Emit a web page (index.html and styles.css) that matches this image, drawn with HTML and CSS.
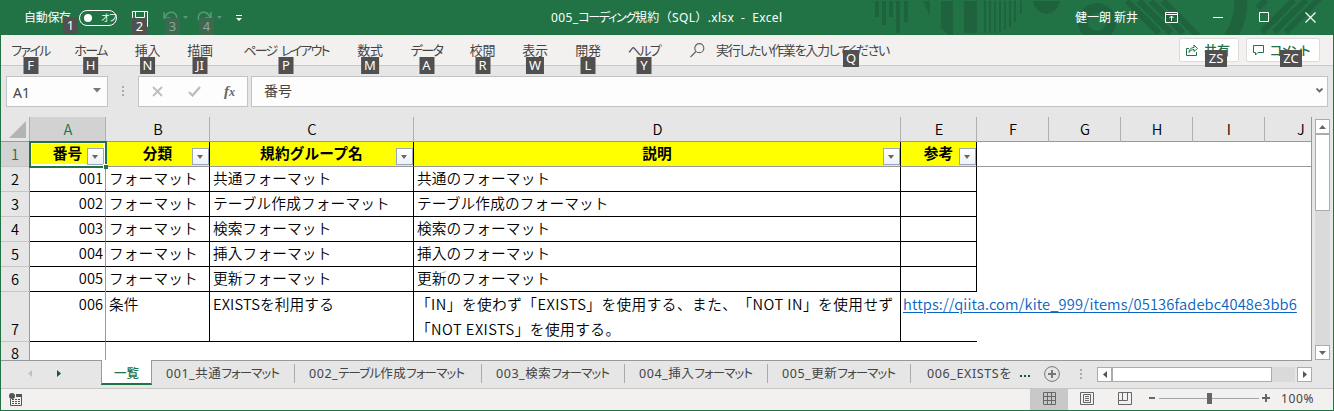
FILE: index.html
```html
<!DOCTYPE html>
<html lang="ja">
<head>
<meta charset="utf-8">
<title>005_コーディング規約（SQL）.xlsx - Excel</title>
<link rel="stylesheet" href="styles.css">
</head>
<body>
<div class="window">
  <header class="titlebar">
    <svg class="pattern" width="460" height="35" viewBox="874 0 460 35" fill="none" stroke="#1e633e">
      <path stroke-width="4" d="M877 1v16M884 1v24M891 1v16M898 1v32M906 1v21"/>
      <path fill="#1e633e" stroke="none" d="M923 1h7v15zM941 1h12v34h-4l-8-7zM964 1h13v32h-13zM1033 1h27c-3 17-24 17-27 0z"/>
      <path stroke-width="2" d="M985 1v32M990 1v32M995 1v32M1000 1v31M1005 1v29M1010 1v26M1015 1v21M1021 1v13"/>
      <circle cx="1097" cy="22" r="14" stroke-width="10"/>
      <path stroke-width="6" d="M1127 1l32 32M1139 1l32 32M1151 1l32 32M1163 1l37 37M1262 32l32-32M1274 32l32-32M1286 32l34-34M1258 8l8-8"/>
      <path stroke-width="13" d="M1241 0q0 22-11 37"/>
    </svg>
    <div class="autosave"><span class="autosave-label">自動保存</span><span class="toggle"><i></i><b>オフ</b></span><kbd class="k1">1</kbd></div>
    <div class="quick">
      <span class="save"><svg width="17" height="17" viewBox="0 0 17 17" fill="none" stroke="#fff"><path d="M.5.5h15v15H.5zM3.500.5v6h9v-6"/></svg><kbd>2</kbd></span>
      <span class="undo"><svg width="26" height="17" viewBox="0 0 26 17" fill="none" stroke="#5b967a" stroke-width="1.500"><path d="M1 1v6h6M1.500 7C4 1 9 0 12 2.500 15 6 14 8 12 10l-5 5"/><path d="M20 5h5l-2.500 3z" fill="#5b967a" stroke="none"/></svg><kbd class="dim">3</kbd></span>
      <span class="redo"><svg width="26" height="17" viewBox="0 0 26 17" fill="none" stroke="#5b967a" stroke-width="1.500"><path d="M14 1v6H8M13.500 7C11 1 6 0 3 2.500 0 6 1 8 3 10l5 5"/><path d="M20 5h5l-2.500 3z" fill="#5b967a" stroke="none"/></svg><kbd class="dim">4</kbd></span>
      <svg class="more" width="6" height="7" viewBox="0 0 6 7" fill="#fff"><path d="M0 0h6v1H0zM0 3h6L3 6z"/></svg>
    </div>
    <div class="doc-title">005_<span class="kana">コーディング</span>規約（SQL）.xlsx&nbsp; -&nbsp; Excel</div>
    <div class="user">健一朗 新井</div>
    <div class="controls">
      <svg width="14" height="11" viewBox="0 0 14 11" fill="none" stroke="#fff"><path d="M.5.5h12v10H.5zM.5 2.500h12M6.500 9V4M4.500 6l2-2 2 2"/></svg>
      <svg width="11" height="11" viewBox="0 0 11 11" stroke="#fff"><path d="M0 5.500h10"/></svg>
      <svg width="11" height="11" viewBox="0 0 11 11" fill="none" stroke="#fff"><path d="M.5.5h9v9h-9z"/></svg>
      <svg width="11" height="11" viewBox="0 0 11 11" stroke="#fff" stroke-width="1.200"><path d="M.5.5l10 10M10.500.5l-10 10"/></svg>
    </div>
  </header>

  <nav class="ribbon">
    <div class="tab kana"><span>ファイル</span><kbd>F</kbd></div>
    <div class="tab kana"><span>ホーム</span><kbd>H</kbd></div>
    <div class="tab"><span>挿入</span><kbd>N</kbd></div>
    <div class="tab"><span>描画</span><kbd>JI</kbd></div>
    <div class="tab kana layout"><span>ページ レイアウト</span><kbd>P</kbd></div>
    <div class="tab"><span>数式</span><kbd>M</kbd></div>
    <div class="tab kana"><span>データ</span><kbd>A</kbd></div>
    <div class="tab"><span>校閲</span><kbd>R</kbd></div>
    <div class="tab"><span>表示</span><kbd>W</kbd></div>
    <div class="tab"><span>開発</span><kbd>L</kbd></div>
    <div class="tab kana"><span>ヘルプ</span><kbd>Y</kbd></div>
    <div class="search"><svg width="15" height="15" viewBox="0 0 15 15" fill="none" stroke="#666" stroke-width="1.200"><circle cx="9.300" cy="5.200" r="4.500"/><path d="M6 8.500L.5 14"/></svg><span>実行したい作業を入力してください</span><kbd>Q</kbd></div>
    <div class="share"><svg width="13" height="12" viewBox="0 0 13 12" fill="none" stroke="#217346"><path d="M3 4.500H.5v7h10V8M3 8.500c0-3 2-5 5-5V1l3.500 3.500L8 7.500V5.500c-2 0-4 1-5 3z"/></svg><span>共有</span><kbd>ZS</kbd></div>
    <div class="share comment"><svg width="12" height="11" viewBox="0 0 12 11" fill="none" stroke="#217346"><path d="M.5.5h10v7H5l-2.500 2.500V7.500h-2z"/></svg><span class="kana">コメント</span><kbd>ZC</kbd></div>
  </nav>

  <div class="formula">
    <div class="namebox"><span>A1</span><svg width="8" height="5" viewBox="0 0 8 5" fill="#777"><path d="M0 0h8L4 4.500z"/></svg></div>
    <svg class="dots" width="2" height="11" viewBox="0 0 2 11" fill="#aaa"><path d="M0 0h2v2H0zM0 4h2v2H0zM0 8h2v2H0z"/></svg>
    <div class="fxbox">
      <svg width="11" height="11" viewBox="0 0 11 11" stroke="#bdbdbd" stroke-width="1.800"><path d="M1 1l9 9M10 1l-9 9"/></svg>
      <svg width="13" height="11" viewBox="0 0 13 11" fill="none" stroke="#bdbdbd" stroke-width="2.300"><path d="M1 6l3.500 3.500L12 1"/></svg>
      <em>f<small>x</small></em>
    </div>
    <div class="input"><span>番号</span><svg width="7" height="5" viewBox="0 0 7 5" fill="none" stroke="#666" stroke-width="1.800"><path d="M.5.5l3 3 3-3"/></svg></div>
  </div>

  <main class="main">
    <div class="sheet">
      <div class="row heads"><div class="corner"><svg width="17" height="17" viewBox="0 0 17 17" fill="#b4b4b4"><path d="M17 0v17H0z"/></svg></div><div class="sel">A</div><div>B</div><div>C</div><div>D</div><div>E</div><div>F</div><div>G</div><div>H</div><div>I</div><div class="last">J</div></div>
      <div class="row first"><div class="num sel">1</div><div class="active"><span>番号</span><i class="filter"></i><i class="handle"></i></div><div>分類<i class="filter"></i></div><div>規約グループ名<i class="filter"></i></div><div>説明<i class="filter"></i></div><div>参考<i class="filter"></i></div><div class="blank"></div></div>
      <div class="row"><div class="num">2</div><div class="a">001</div><div>フォーマット</div><div>共通フォーマット</div><div>共通のフォーマット</div><div></div></div>
      <div class="row"><div class="num">3</div><div class="a">002</div><div>フォーマット</div><div>テーブル作成フォーマット</div><div>テーブル作成のフォーマット</div><div></div></div>
      <div class="row"><div class="num">4</div><div class="a">003</div><div>フォーマット</div><div>検索フォーマット</div><div>検索のフォーマット</div><div></div></div>
      <div class="row"><div class="num">5</div><div class="a">004</div><div>フォーマット</div><div>挿入フォーマット</div><div>挿入のフォーマット</div><div></div></div>
      <div class="row"><div class="num">6</div><div class="a">005</div><div>フォーマット</div><div>更新フォーマット</div><div>更新のフォーマット</div><div></div></div>
      <div class="row tall"><div class="num">7</div><div class="a">006</div><div>条件</div><div>EXISTSを利用する</div><div class="wide">「IN」を使わず「EXISTS」を使用する、また、「NOT IN」を使用せず<br>「NOT EXISTS」を使用する。</div><div class="linkcell"><a>https://qiita.com/kite_999/items/05136fadebc4048e3bb6</a></div></div>
      <div class="row end"><div class="num">8</div><div class="a"></div></div>
    </div>
    <div class="vscroll">
      <div class="btn"><svg width="7" height="4" viewBox="0 0 7 4" fill="#666"><path d="M0 4h7L3.500 0z"/></svg></div>
      <div class="vthumb"></div><div class="vtrack"></div>
      <div class="btn"><svg width="7" height="4" viewBox="0 0 7 4" fill="#666"><path d="M0 0h7L3.500 4z"/></svg></div>
    </div>
  </main>

  <div class="sheets">
    <div class="arrows"><svg width="4" height="7" viewBox="0 0 4 7" fill="#c0c0c0"><path d="M4 0v7L0 3.500z"/></svg><svg width="4" height="7" viewBox="0 0 4 7" fill="#0e5c2f"><path d="M0 0v7l4-3.500z"/></svg></div>
    <div class="st on">一覧</div>
    <div class="st w1">001_共通<span class="kana">フォーマット</span></div>
    <div class="st w2">002_<span class="kana">テーブル</span>作成<span class="kana">フォーマット</span></div>
    <div class="st w3">003_検索<span class="kana">フォーマット</span></div>
    <div class="st w3">004_挿入<span class="kana">フォーマット</span></div>
    <div class="st w3">005_更新<span class="kana">フォーマット</span></div>
    <div class="st cut"><span>006_EXISTSを</span></div>
    <svg class="ell" width="11" height="2" viewBox="0 0 11 2" fill="#0e5c2f"><path d="M0 0h2v2H0zM4 0h2v2H4zM8 0h2v2H8z"/></svg>
    <svg class="add" width="16" height="16" viewBox="0 0 16 16" fill="none" stroke="#777"><circle cx="8" cy="8" r="7.400"/><path stroke-width="2" d="M4 8h8M8 4v8"/></svg>
    <svg class="grip" width="2" height="11" viewBox="0 0 2 11" fill="#aaa"><path d="M0 0h2v2H0zM0 4h2v2H0zM0 8h2v2H0z"/></svg>
    <div class="hscroll">
      <div class="btn"><svg width="4" height="7" viewBox="0 0 4 7" fill="#555"><path d="M4 0v7L0 3.500z"/></svg></div>
      <div class="hthumb"></div><div class="htrack"></div>
      <div class="btn"><svg width="4" height="7" viewBox="0 0 4 7" fill="#555"><path d="M0 0v7l4-3.500z"/></svg></div>
    </div>
  </div>

  <footer class="status">
    <svg class="macro" width="13" height="13" viewBox="0 0 13 13"><path fill="none" stroke="#555" d="M1.500 6v6.500h11v-11H7"/><path fill="#555" d="M7 1h6v3H7zM3 6h2v1H3zM6 6h2v1H6zM9 6h2v1H9zM3 8h2v1H3zM6 8h2v1H6zM9 8h2v1H9zM3 10h2v1H3zM6 10h2v1H6zM9 10h2v1H9z"/><circle cx="3" cy="3" r="3" fill="#555"/></svg>
    <div class="view on"><svg width="13" height="13" viewBox="0 0 13 13" fill="none" stroke="#666"><path d="M.5.5h12v12H.5zM.5 4.500h12M.5 8.500h12M4.500.5v12M8.500.5v12"/></svg></div>
    <div class="view"><svg width="14" height="13" viewBox="0 0 14 13" fill="none" stroke="#666"><path d="M.5.5h13v12H.5zM3.500 2.500h7v8h-7zM5 4.500h4M5 6.500h4M5 8.500h4"/></svg></div>
    <div class="view"><svg width="14" height="13" viewBox="0 0 14 13" fill="none" stroke="#666"><path d="M.5.5h13v12H.5zM4.500.5v8M9.500.5v8M.5 8.500h9"/></svg></div>
    <svg class="zoom" width="122" height="11" viewBox="0 0 122 11" fill="#666"><path fill="#a6a6a6" d="M10 5h100v1H10z"/><path d="M0 4h6v2H0zM58 0h5v11h-5zM113 4h8v2h-8zM116 1h2v8h-2z"/></svg>
    <span class="pct">100%</span>
  </footer>
</div>
</body>
</html>
```
FILE: styles.css
```css
* { box-sizing: border-box; }
body { margin: 0; font: 12px/16px "Noto Sans", "Noto Sans CJK JP", sans-serif; color: #444; }
svg { display: block; flex: none; }
i, em { font-style: normal; }
.window { width: 1334px; height: 411px; display: flex; flex-direction: column; background: #e6e6e6; border: solid #217346; border-width: 0 1px 1px; overflow: hidden; }
.kana { font-feature-settings: "palt"; letter-spacing: -1.6px; }
kbd { position: absolute; z-index: 3; min-width: 15px; height: 17px; padding: 0 3px; background: #505050; color: #fff; font: 13px/17px "Noto Sans", sans-serif; letter-spacing: 0; text-align: center; }
kbd.dim { background: #3e684f; color: #8aa898; }

.titlebar { position: relative; flex: none; height: 35px; margin: 0 -1px; padding-left: 24px; display: flex; background: #217346; color: #fff; }
.pattern { position: absolute; right: 0; top: 0; }
.titlebar > div { position: relative; }
.autosave { display: flex; align-items: center; width: 108px; gap: 9px; }
.autosave-label { width: 46px; letter-spacing: -.3px; white-space: nowrap; }
.toggle { display: flex; align-items: center; gap: 8px; width: 38px; height: 16px; padding-left: 4px; border: 1px solid #fff; border-radius: 8px; }
.toggle i { flex: none; width: 8px; height: 8px; border-radius: 50%; background: #fff; }
.toggle b { font-weight: 400; font-size: 9px; letter-spacing: -1.5px; white-space: nowrap; line-height: 14px; padding: 1px 0 0 1px; }
.k1 { left: 39px; top: 17px; }
.quick { display: flex; padding-top: 11px; width: 419px; }
.quick > span { position: relative; height: 17px; }
.quick kbd { top: 7px; }
.save { width: 31px; } .save kbd { left: 0; }
.undo { width: 34px; } .undo kbd { left: 2px; }
.redo { width: 39px; } .redo kbd { left: 2px; }
.more { margin-top: 4px; }
.doc-title { width: 524px; line-height: 35px; white-space: nowrap; letter-spacing: .35px; }
.doc-title .kana { letter-spacing: -1.3px; }
.user { width: 90px; line-height: 35px; white-space: nowrap; }
.controls { display: flex; align-items: center; gap: 35px; }
.controls svg:first-child { margin-right: -1px; }

.ribbon { flex: none; height: 31px; display: grid; grid-template-columns: 59px 61px 53px 52px 120px 48px 65px 47px 58px 48px 64px 503px 67px 74px; background: #f3f1ef; border-bottom: 1px solid #c8c8c8; font-size: 13px; }
.tab { position: relative; display: flex; justify-content: center; line-height: 30px; white-space: nowrap; }
.tab kbd { bottom: -9px; left: 50%; transform: translateX(-50%); }
.tab:not(.kana) { letter-spacing: -.3px; }
.layout { letter-spacing: -1.8px; word-spacing: 3px; }
.search { position: relative; display: flex; align-items: center; gap: 11px; padding-left: 14px; white-space: nowrap; font-feature-settings: "palt"; letter-spacing: -1.3px; }
.search kbd { left: 167px; top: 15px; }
.share { position: relative; display: flex; align-items: center; gap: 5px; height: 24px; margin: 3px 8px 0 0; width: 60px; padding-left: 6px; background: #fff; border: 1px solid #dedcda; border-radius: 2px; color: #217346; font-weight: 500; white-space: nowrap; }
.comment { width: 74px; }
.share kbd { left: 25px; top: 11px; width: 22px; }
.comment kbd { left: 33px; }

.formula { flex: none; height: 51px; display: flex; align-items: flex-start; padding: 10px 5px; font-size: 14px; }
.formula > div { height: 31px; background: #fdfdfd; border: 1px solid #c3c3c3; display: flex; align-items: center; }
.namebox { width: 102px; padding: 3px 6px 0; justify-content: space-between; }
.namebox svg { margin-top: -6px; }
.dots { margin: 10px 14px 0; }
.fxbox { width: 110px; padding-left: 13px; gap: 25px; }
.fxbox em { font: italic bold 15px/20px "Liberation Serif", serif; color: #666; margin-left: -2px; }
.fxbox small { font-size: 12px; }
.input { margin-left: 3px; width: 1077px; padding: 0 4px 2px 12px; justify-content: space-between; }

.main { flex: none; height: 243px; display: flex; font: 350 14.67px/25px "Noto Sans CJK JP", sans-serif; color: #000; }
.sheet { width: 1311px; height: 243px; background: #fff; border: solid #999; border-width: 0 1px 0 0; overflow: hidden; text-spacing-trim: space-all; letter-spacing: .15px; }
.row { display: grid; grid-template-columns: 29px 76px 104px 204px 487px 76px 72px 72px 72px 72px 47px; height: 25px; width: 1311px; }
.row > div { position: relative; border: solid #000; border-width: 0 1px 1px 0; padding-left: 3px; white-space: nowrap; line-height: 22px; }
.row > .num { background: #e6e6e6; border-color: #c6c6c6 #999 #c6c6c6; padding: 0 0 1px; text-align: center; display: flex; align-items: flex-end; justify-content: center; }
.row > .a { text-align: right; padding: 0 2px 0 0; border-right-color: #999; letter-spacing: 0; }
.row > .sel { background: #d2d2d2; color: #217346; }
.row.heads > div { background: #e6e6e6; text-align: center; padding: 0 0 0 1px; line-height: 24px; border-right-color: #b0b0b0; border-bottom-color: #999; }
.row.heads > .sel { background: #d2d2d2; }
.row.heads > .corner { display: flex; justify-content: flex-end; align-items: center; padding-right: 3px; }
.row.heads > .last { border-right: 0; padding-left: 25px; }
.first > div:not(.num) { background: #ff0; font-weight: 700; text-align: center; border-bottom-color: #999; padding-left: 0; padding-right: 0; }
.first > .blank { grid-column: 7 / -1; background: #fff !important; }
.row > .active { z-index: 2; outline: 2px solid #217346; outline-offset: -1px; box-shadow: inset 0 0 0 2px #fff; border-right-color: #217346; }
.filter { position: absolute; right: 0; bottom: 1px; width: 17px; height: 17px; border: 1px solid #9aa8bb; background: linear-gradient(#fff, #edf1f6); }
.active .filter { right: 1px; }
.filter::after { content: ""; position: absolute; left: 4px; top: 6px; border: solid transparent; border-width: 4px 3.500px 0; border-top-color: #666; }
.handle { position: absolute; right: -3px; bottom: -3px; width: 5px; height: 5px; background: #217346; border: solid #fff; border-width: 1px 0 0 1px; }
.tall { height: 50px; }
.row.tall > div { line-height: 25px; margin-top: -1px; }
.row.tall > .num { margin-top: 0; padding-bottom: 0; }
.row.tall > .wide { letter-spacing: .46px; padding-left: 2px; }
.row.tall > .linkcell { border-right: 0; padding-left: 2px; }
.linkcell a { color: #0563c1; text-decoration: underline; text-underline-offset: 2px; letter-spacing: .14px; }
.end { height: 19px; }
.end > div { border-bottom: 0; }
.end > .num { align-items: flex-start; }
.vscroll { width: 15px; margin: 2px 0 0 3px; display: flex; flex-direction: column; }
.btn { flex: none; width: 15px; height: 15px; border: 1px solid #ababab; background: #fff; display: flex; align-items: center; justify-content: center; }
.vthumb { height: 77px; border: 1px solid #ababab; background: #fff; }
.vtrack { height: 134px; background: #dadada; }

.sheets { flex: none; height: 29px; display: flex; border-bottom: 1px solid #c6c6c6; font-size: 12.500px; background: linear-gradient(#999, #999) 0 0 / 1311px 1px no-repeat; }
.arrows { width: 100px; display: flex; gap: 25px; padding: 10px 0 0 27px; }
.st { position: relative; height: 25px; line-height: 27px; padding-left: 14px; white-space: nowrap; letter-spacing: .55px; }
.st .kana { letter-spacing: -.9px; }
.st:not(.on)::after { content: ""; position: absolute; right: 0; top: 4px; width: 1px; height: 19px; background: #aaa; }
.st.on { width: 51px; padding-left: 12px; background: #fff; color: #217346; letter-spacing: 0; font-weight: 500; border: solid #999; border-width: 0 1px; border-bottom: 2px solid #217346; }
.w1 { width: 143px; } .w2 { width: 187px; } .w3 { width: 143px; }
.st.cut { width: 101px; padding-left: 16px; }
.st.cut span { display: block; overflow: hidden; width: 85px; letter-spacing: .6px; }
.st.cut::after { display: none; }
.ell { margin: 15px 13px 0 8px; }
.add { margin: 6px 20px 0 0; }
.grip { margin: 9px 15px 0 0; }
.hscroll { margin-top: 7px; display: flex; width: 215px; }
.hthumb { width: 160px; height: 15px; border: 1px solid #ababab; background: #fff; }
.htrack { width: 23px; height: 15px; background: #dadada; margin-right: 2px; }

.status { flex: 1; display: flex; background: #f3f1ef; }
.macro { margin: 4px 1008px 0 8px; }
.view { width: 38px; padding-top: 3px; display: flex; justify-content: center; }
.view.on { background: #c8c8c8; }
.zoom { margin: 4px 0 0 5px; }
.pct { margin-left: 10px; line-height: 20px; letter-spacing: .6px; }
```
